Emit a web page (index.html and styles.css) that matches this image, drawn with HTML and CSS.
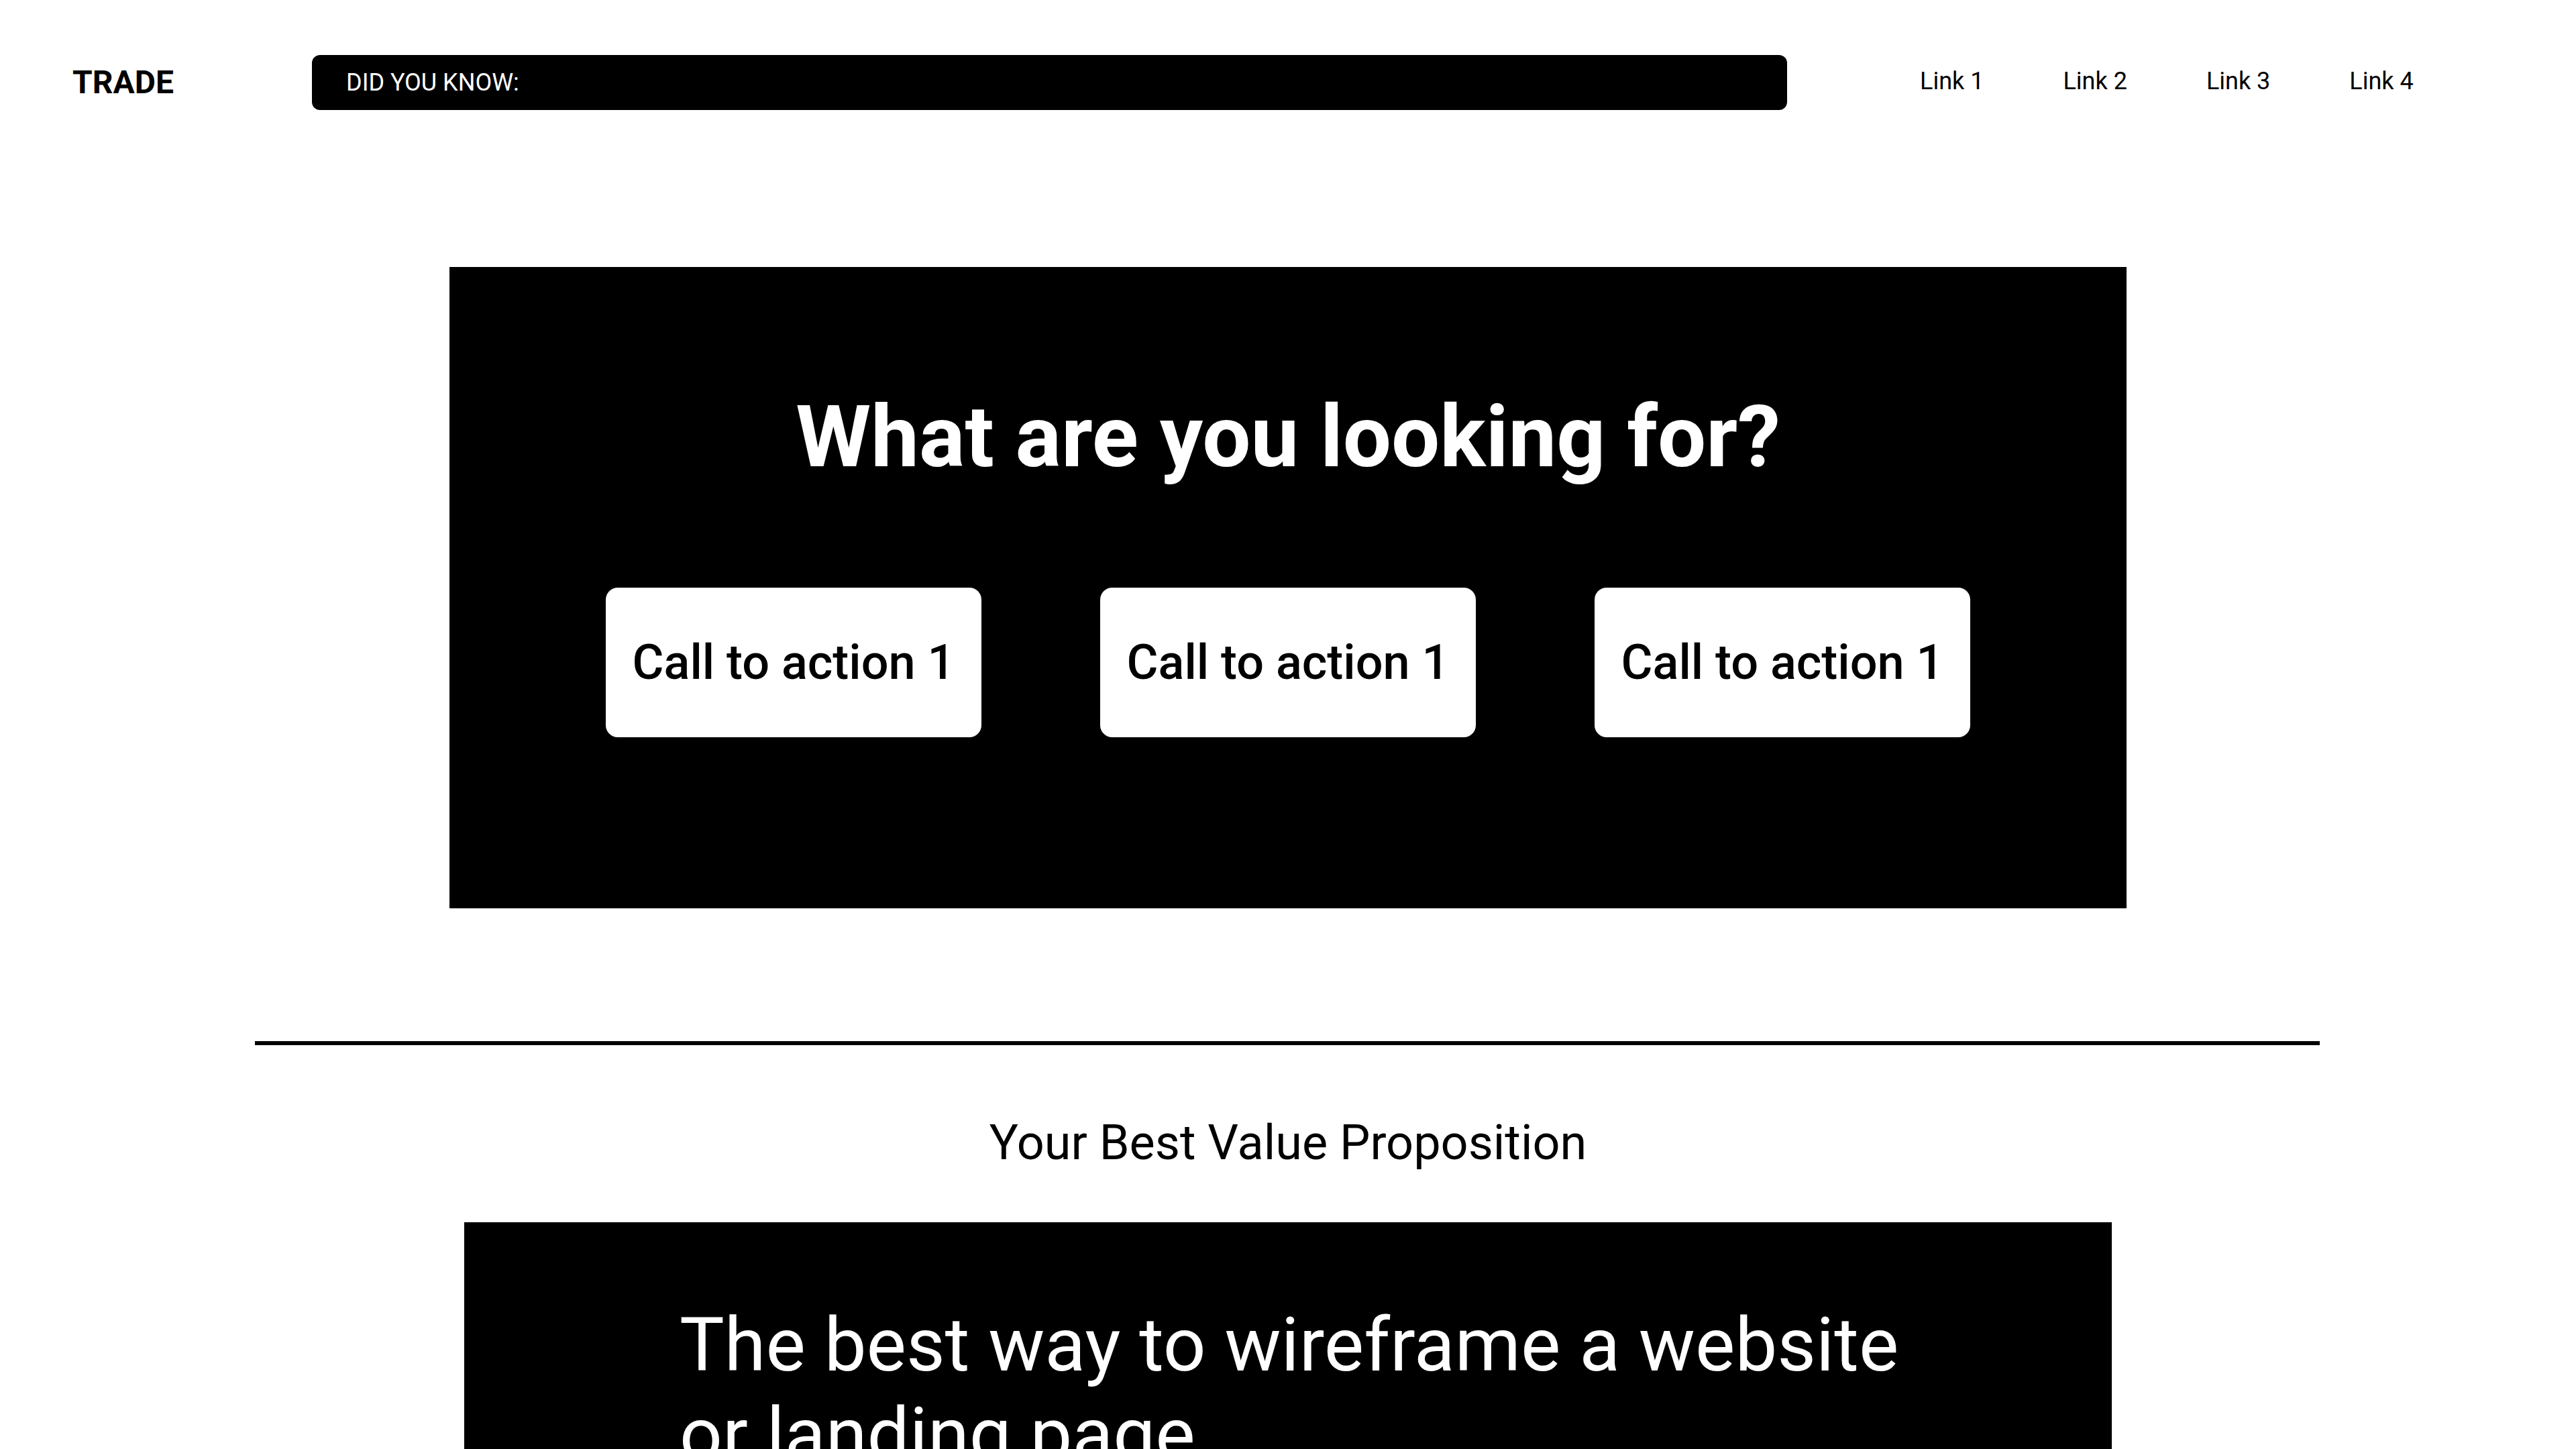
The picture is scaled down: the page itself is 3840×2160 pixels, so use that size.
FILE: index.html
```html
<!DOCTYPE html>
<html lang="en">
<head>
<meta charset="utf-8">
<title>Trade</title>
<link rel="stylesheet" href="styles.css">
</head>
<body>
<header class="topbar">
  <div class="logo">TRADE</div>
  <div class="ticker">DID YOU KNOW:</div>
  <nav class="nav">
    <a class="nav-link" href="#">Link 1</a>
    <a class="nav-link" href="#">Link 2</a>
    <a class="nav-link" href="#">Link 3</a>
    <a class="nav-link" href="#">Link 4</a>
  </nav>
</header>
<main>
  <section class="hero">
    <h1 class="hero-title">What are you looking for?</h1>
    <div class="cta-row">
      <a class="cta" href="#">Call to action 1</a>
      <a class="cta" href="#">Call to action 1</a>
      <a class="cta" href="#">Call to action 1</a>
    </div>
  </section>
  <hr class="divider">
  <h2 class="value-title">Your Best Value Proposition</h2>
  <section class="feature">
    <p class="feature-text">The best way to wireframe a website or landing page</p>
  </section>
</main>
</body>
</html>
```

FILE: styles.css
```css
* { box-sizing: border-box; }
html, body {
  margin: 0;
  padding: 0;
  background: #ffffff;
  color: #000000;
  font-family: Roboto, "Liberation Sans", Arial, sans-serif;
}
body { overflow: hidden; }

.topbar {
  display: flex;
  align-items: center;
  padding: 82px 0 0 108px;
}
.logo {
  width: 357px;
  flex: none;
  font-weight: 700;
  font-size: 48px;
  line-height: 82px;
}
.ticker {
  flex: none;
  width: 2199px;
  height: 82px;
  background: #000;
  color: #fff;
  border-radius: 12px;
  font-size: 36px;
  line-height: 82px;
  padding-left: 51px;
}
.nav {
  display: flex;
  gap: 118px;
  margin-left: 198px;
}
.nav-link {
  color: #000;
  text-decoration: none;
  font-size: 36px;
  line-height: 82px;
  margin-top: -4px;
}

.hero {
  width: 2500px;
  height: 956px;
  margin: 234px auto 0;
  background: #000;
  padding-top: 176px;
}
.hero-title {
  margin: 0;
  color: #fff;
  font-weight: 700;
  font-size: 128px;
  line-height: 155px;
  text-align: center;
}
.cta-row {
  display: flex;
  justify-content: center;
  gap: 177px;
  margin-top: 147px;
}
.cta {
  width: 560px;
  height: 223px;
  background: #fff;
  color: #000;
  border-radius: 18px;
  display: flex;
  align-items: center;
  justify-content: center;
  text-decoration: none;
  font-weight: 500;
  font-size: 72px;
}

.divider {
  width: 3078px;
  height: 6px;
  margin: 198px 0 0 380px;
  border: 0;
  background: #000;
}

.value-title {
  margin: 104px 0 0;
  text-align: center;
  font-weight: 400;
  font-size: 72px;
  line-height: 84px;
}

.feature {
  width: 2456px;
  height: 600px;
  margin: 76px auto 0;
  background: #000;
  padding: 116px 0 0 321px;
}
.feature-text {
  margin: 0;
  max-width: 1880px;
  color: #fff;
  font-weight: 400;
  font-size: 112px;
  line-height: 134px;
}
```
